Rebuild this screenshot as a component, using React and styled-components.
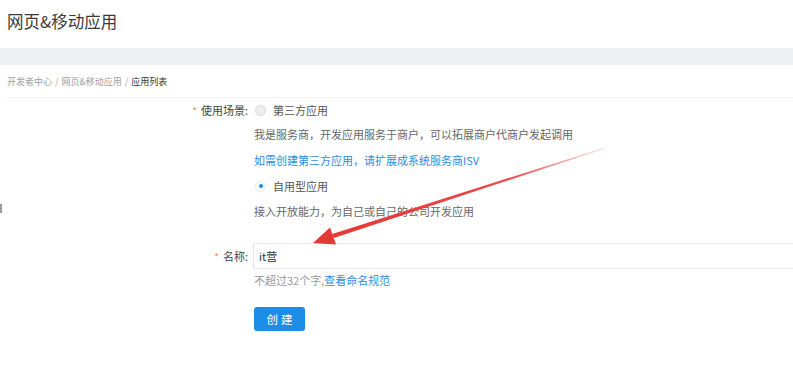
import React from "react";
import styled, { createGlobalStyle } from "styled-components";

const Global = createGlobalStyle`
  html, body { margin: 0; padding: 0; background: #fff; }
  body {
    font-family: "Noto Sans CJK SC", "Noto Sans", "Liberation Sans", sans-serif;
    color: #333;
    overflow: hidden;
  }
`;

const Page = styled.div`
  position: relative;
  width: 793px;
  height: 388px;
  overflow: hidden;
`;

const Header = styled.div`
  height: 48px;
  display: flex;
  align-items: center;
  padding: 0 0 6px 7px;
  box-sizing: border-box;
  font-size: 16.5px;
  color: #3a3a3a;
`;

const Band = styled.div`
  height: 17px;
  background: #eef1f4;
`;

const Crumbs = styled.div`
  height: 32px;
  display: flex;
  align-items: center;
  margin-left: 7px;
  font-size: 9px;
  color: #a0a0a0;
  border-bottom: 1px solid #efefef;
`;

const CrumbSep = styled.span`
  margin: 0 3px;
`;

const CrumbCurrent = styled.span`
  color: #333;
`;

const Form = styled.div`
  display: grid;
  grid-template-columns: 254px 1fr;
  font-size: 11px;
`;

const Label = styled.div`
  display: flex;
  justify-content: flex-end;
  align-items: center;
  padding-right: 6px;
  height: ${(p) => p.$h || 24}px;
  margin-top: ${(p) => p.$mt || 0}px;
  color: #444;
  white-space: nowrap;
`;

const Star = styled.span`
  color: #f5873b;
  font-size: 10px;
  margin-right: 4px;
`;

const Cell = styled.div`
  display: flex;
  align-items: center;
  height: ${(p) => p.$h || 24}px;
  margin-top: ${(p) => p.$mt || 0}px;
  margin-left: ${(p) => p.$ml || 0}px;
  color: ${(p) => p.$color || "#666"};
  white-space: nowrap;
  min-width: 0;
`;

const Radio = styled.span`
  width: 11px;
  height: 11px;
  border-radius: 50%;
  box-sizing: border-box;
  border: 1px solid ${(p) => (p.$checked ? "#e3e7ec" : "#d9d9d9")};
  background: ${(p) => (p.$checked ? "#fff" : "#eeeeee")};
  display: inline-flex;
  align-items: center;
  justify-content: center;
  margin-right: 7px;
  margin-left: 1px;
  &::after {
    content: "";
    display: ${(p) => (p.$checked ? "block" : "none")};
    width: 4px;
    height: 4px;
    border-radius: 50%;
    background: #1e88e5;
  }
`;

const RadioText = styled.span`
  color: #555;
`;

const Link = styled.span`
  color: #2d8ce3;
`;

const Input = styled.div`
  flex: 1;
  height: 26px;
  box-sizing: border-box;
  border: 1px solid #e6e6e6;
  border-right: none;
  display: flex;
  align-items: center;
  padding-left: 5px;
  color: #333;
  font-size: 11px;
`;

const Help = styled.span`
  color: #999;
`;

const Button = styled.button`
  width: 51px;
  height: 24px;
  border: none;
  border-radius: 3px;
  background: #1c8de6;
  color: #fff;
  font-family: inherit;
  font-size: 11.5px;
  letter-spacing: 3px;
  padding: 0 0 0 3px;
`;

const EdgeMark = styled.div`
  position: absolute;
  left: 0;
  top: 204px;
  width: 2px;
  height: 9px;
  background: #9a9a9a;
`;

const ArrowLayer = styled.svg`
  position: absolute;
  left: 0;
  top: 0;
  pointer-events: none;
`;

export default function App() {
  return (
    <>
      <Global />
      <Page>
        <Header>网页&amp;移动应用</Header>
        <Band />
        <Crumbs>
          开发者中心<CrumbSep>/</CrumbSep>网页&amp;移动应用<CrumbSep>/</CrumbSep>
          <CrumbCurrent>应用列表</CrumbCurrent>
        </Crumbs>
        <Form>
          <Label>
            <Star>*</Star>使用场景:
          </Label>
          <Cell>
            <Radio />
            <RadioText>第三方应用</RadioText>
          </Cell>
          <div />
          <Cell>我是服务商，开发应用服务于商户，可以拓展商户代商户发起调用</Cell>
          <div />
          <Cell $h={26} $mt={1}>
            <Link>如需创建第三方应用，请扩展成系统服务商ISV</Link>
          </Cell>
          <div />
          <Cell $h={26}>
            <Radio $checked />
            <RadioText>自用型应用</RadioText>
          </Cell>
          <div />
          <Cell>接入开放能力，为自己或自己的公司开发应用</Cell>
          <Label $h={26} $mt={20}>
            <Star>*</Star>名称:
          </Label>
          <Cell $h={26} $mt={20} $ml={-1}>
            <Input>it营</Input>
          </Cell>
          <div />
          <Cell $h={22}>
            <Help>
              不超过32个字,<Link>查看命名规范</Link>
            </Help>
          </Cell>
          <div />
          <Cell $h={24} $mt={16}>
            <Button>创建</Button>
          </Cell>
        </Form>
        <EdgeMark />
        <ArrowLayer width="793" height="388" viewBox="0 0 793 388">
          <defs>
            <linearGradient id="fade" x1="605" y1="148" x2="330" y2="236" gradientUnits="userSpaceOnUse">
              <stop offset="0" stopColor="#e53935" stopOpacity="0.15" />
              <stop offset="0.35" stopColor="#e53935" stopOpacity="0.9" />
              <stop offset="1" stopColor="#e53935" />
            </linearGradient>
          </defs>
          <polygon
            points="605.2,148.4 604.8,147.6 332.2,233.9 333.8,238.1"
            fill="url(#fade)"
          />
          <polygon points="313,243 336,244.5 330,227.5" fill="#e53935" />
        </ArrowLayer>
      </Page>
    </>
  );
}
